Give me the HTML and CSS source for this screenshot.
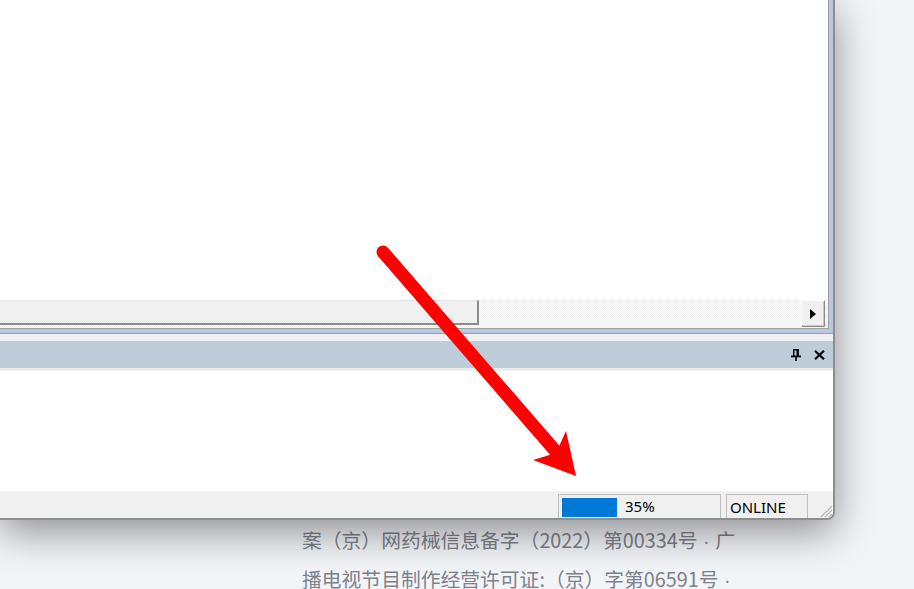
FILE: index.html
```html
<!DOCTYPE html>
<html lang="zh-CN">
<head>
<meta charset="utf-8">
<title>Window</title>
<link rel="stylesheet" href="styles.css">
</head>
<body>
<div class="page">
  <div class="window">
    <div class="top-frame">
      <div class="top-pane">
        <div class="top-inner">
          <div class="canvas"></div>
          <div class="hscroll">
            <div class="thumb"></div>
            <div class="track"></div>
            <div class="btn-right">
              <svg width="6" height="10" viewBox="0 0 6 10"><path d="M0 0 L6 5 L0 10 Z" fill="#000"/></svg>
            </div>
          </div>
        </div>
      </div>
    </div>
    <div class="splitter"></div>
    <div class="panel-header">
      <svg class="pin" width="10" height="12" viewBox="0 0 10 12">
        <rect x="2" y="0" width="6" height="1.5" fill="#000"/>
        <rect x="2" y="0" width="1.5" height="7" fill="#000"/>
        <rect x="5.5" y="0" width="2.5" height="7" fill="#000"/>
        <rect x="0" y="6.5" width="10" height="1.8" fill="#000"/>
        <rect x="4.2" y="7.5" width="1.6" height="4.5" fill="#000"/>
      </svg>
      <svg class="close" width="11" height="10" viewBox="0 0 11 10">
        <path d="M1 0.8 L10 9.2 M10 0.8 L1 9.2" stroke="#000" stroke-width="2.2" fill="none"/>
      </svg>
    </div>
    <div class="panel-sep"></div>
    <div class="panel-body"></div>
    <div class="statusbar">
      <div class="progress-box">
        <div class="progress-fill"></div>
        <span class="progress-text">35%</span>
      </div>
      <div class="status-box">ONLINE</div>
      <div class="grip">
        <svg width="16" height="16" viewBox="0 0 16 16">
          <path d="M15 4 L4 15 M15 8 L8 15 M15 12 L12 15" stroke="#b4b4b4" stroke-width="1.2" fill="none"/>
          <path d="M16 5 L5 16 M16 9 L9 16 M16 13 L13 16" stroke="#ffffff" stroke-width="1" fill="none"/>
        </svg>
      </div>
    </div>
  </div>
  <div class="footer">
    <p class="footer-line">案（京）网药械信息备字（2022）第00334号<span class="dot"> · </span>广</p>
    <p class="footer-line">播电视节目制作经营许可证:（京）字第06591号<span class="dot"> ·</span></p>
  </div>
  <svg class="arrow" width="914" height="589" viewBox="0 0 914 589">
    <line x1="383" y1="252" x2="558" y2="454" stroke="#fe0000" stroke-width="13" stroke-linecap="round"/>
    <polygon points="576,476 533,460 556,453 566,431" fill="#fe0000"/>
  </svg>
</div>
</body>
</html>
```

FILE: styles.css
```css
html, body {
  margin: 0;
  padding: 0;
}
body {
  background: #f3f4f8;
  overflow: hidden;
  width: 914px;
  height: 589px;
}
.page {
  position: relative;
  width: 914px;
  height: 589px;
  overflow: hidden;
}
.window {
  width: 833px;
  height: 518px;
  border-right: 2px solid #8e8e8e;
  border-bottom: 2px solid #8e8e8e;
  border-bottom-right-radius: 8px;
  overflow: hidden;
  display: flex;
  flex-direction: column;
  background: #f0f0f0;
  box-shadow: 0 12px 40px rgba(0, 0, 0, 0.42);
  position: relative;
  z-index: 1;
}
.top-frame {
  border-bottom: 1px solid #9a9ea6;
}
.top-pane {
  border-right: 4px solid #b8c7e3;
  border-bottom: 4px solid #b8c7e3;
}
.top-inner {
  border-right: 1px solid #a0a0a0;
  border-bottom: 1px solid #a0a0a0;
  display: flex;
  flex-direction: column;
}
.canvas {
  height: 300px;
  background: #ffffff;
}
.hscroll {
  height: 28px;
  display: flex;
  background-color: #ffffff;
  background-image: conic-gradient(#ffffff 25%, #ededed 0 50%, #ffffff 0 75%, #ededed 0);
  background-size: 2px 2px;
}
.thumb {
  width: 477px;
  height: 22px;
  background: #f0f0f0;
  border-top: 1px solid #e3e3e3;
  border-bottom: 2px solid #8c8c8c;
  border-right: 2px solid #8c8c8c;
}
.track {
  flex: 1;
}
.btn-right {
  width: 22px;
  height: 25px;
  margin-right: 3px;
  background: #f0f0f0;
  border-top: 1px solid #ffffff;
  border-left: 1px solid #ffffff;
  border-right: 1px solid #8c8c8c;
  border-bottom: 1px solid #8c8c8c;
  box-shadow: inset -1px -1px 0 #c8c8c8;
  display: flex;
  align-items: center;
  justify-content: center;
}
.splitter {
  height: 7px;
  background: #f0f0f0;
}
.panel-header {
  height: 27px;
  background: #bfcdda;
  display: flex;
  align-items: center;
  justify-content: flex-end;
  gap: 13px;
  padding-right: 8px;
}
.panel-header .pin {
  margin-top: 1px;
}
.panel-sep {
  height: 3px;
  background: #ebebeb;
}
.panel-body {
  height: 120px;
  background: #ffffff;
}
.statusbar {
  height: 27px;
  background: #f0f0f0;
  display: flex;
  align-items: flex-end;
  justify-content: flex-end;
  font-family: "Noto Sans", "Liberation Sans", sans-serif;
  font-size: 15px;
  color: #000;
}
.progress-box {
  width: 158px;
  height: 23px;
  border: 1px solid #bdbdbd;
  border-bottom: none;
  display: flex;
  align-items: center;
  padding-left: 3px;
  margin-right: 5px;
}
.progress-fill {
  width: 55px;
  height: 19px;
  background: #0078d7;
  margin-top: 1px;
}
.progress-text {
  margin-left: 8px;
  line-height: 23px;
}
.status-box {
  width: 77px;
  height: 23px;
  line-height: 24px;
  border: 1px solid #bdbdbd;
  border-bottom: none;
  padding-left: 3px;
}
.grip {
  width: 25px;
  height: 27px;
  display: flex;
  align-items: flex-end;
  justify-content: flex-end;
}
.footer {
  margin-left: 302px;
  padding-top: 1px;
  font-family: "Noto Sans CJK SC", "Noto Sans", sans-serif;
  font-size: 19.8px;
  line-height: 37px;
  color: #7d828c;
}
.footer-line {
  margin: 0;
  white-space: nowrap;
}
.dot {
  font-family: "Liberation Sans", Arial, sans-serif;
}
.arrow {
  position: absolute;
  left: 0;
  top: 0;
  z-index: 2;
  pointer-events: none;
}
```
